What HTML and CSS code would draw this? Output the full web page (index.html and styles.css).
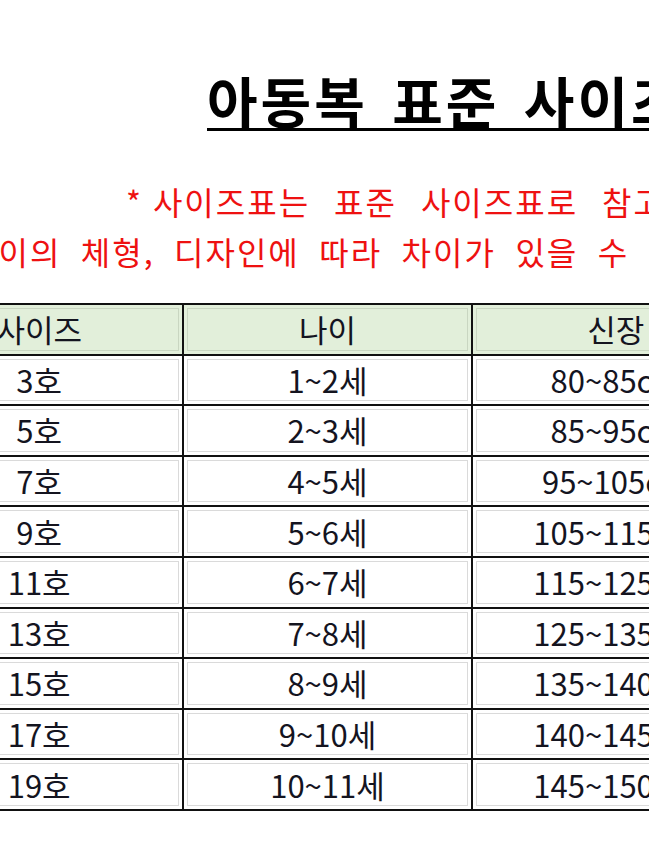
FILE: index.html
```html
<!DOCTYPE html>
<html lang="ko">
<head>
<meta charset="utf-8">
<title>아동복 표준 사이즈표</title>
<link rel="stylesheet" href="styles.css">
</head>
<body>
<div class="sheet">
  <h1 class="title"><span class="title-text">아동복 표준 사이즈표</span></h1>
  <div class="notes">
    <p class="note note-1"><span class="star">* </span>사이즈표는 표준 사이즈표로 참고해주시고,</p>
    <p class="note note-2">아이의 체형, 디자인에 따라 차이가 있을 수 있습니다.</p>
  </div>
  <table class="size-table">
    <thead>
      <tr><th>사이즈</th><th>나이</th><th>신장</th></tr>
    </thead>
    <tbody>
      <tr><td>3호</td><td>1~2세</td><td>80~85cm</td></tr>
      <tr><td>5호</td><td>2~3세</td><td>85~95cm</td></tr>
      <tr><td>7호</td><td>4~5세</td><td>95~105cm</td></tr>
      <tr><td>9호</td><td>5~6세</td><td>105~115cm</td></tr>
      <tr><td>11호</td><td>6~7세</td><td>115~125cm</td></tr>
      <tr><td>13호</td><td>7~8세</td><td>125~135cm</td></tr>
      <tr><td>15호</td><td>8~9세</td><td>135~140cm</td></tr>
      <tr><td>17호</td><td>9~10세</td><td>140~145cm</td></tr>
      <tr><td>19호</td><td>10~11세</td><td>145~150cm</td></tr>
    </tbody>
  </table>
</div>
</body>
</html>
```

FILE: styles.css
```css
html, body {
  margin: 0;
  padding: 0;
  background: #ffffff;
}
body {
  width: 649px;
  height: 864px;
  overflow: hidden;
  font-family: "Noto Sans CJK KR", "Noto Sans", sans-serif;
  color: #14141f;
}
.sheet {
  width: 649px;
  white-space: nowrap;
}
.title {
  margin: 0;
  padding: 70px 0 0 207px;
  height: 68px;
  font-size: 55px;
  font-weight: 700;
  line-height: 58px;
  color: #000;
  letter-spacing: 3px;
  word-spacing: 6px;
}
.title-text {
  text-decoration: underline;
  text-decoration-thickness: 3px;
  text-underline-offset: 5px;
}
.notes {
  padding-top: 38px;
  color: #ee1111;
  font-size: 32px;
  line-height: 50px;
  letter-spacing: 2px;
}
.note {
  margin: 0;
}
.note-1 {
  padding-left: 126px;
  word-spacing: 13px;
}
.star {
  word-spacing: -1px;
}
.note-2 {
  margin-left: -33px;
  word-spacing: 8.5px;
}
.size-table {
  width: 867px;
  margin: 27px 0 0 -106px;
  border-collapse: collapse;
  table-layout: fixed;
  font-size: 31px;
}
.size-table th,
.size-table td {
  height: 48.6px;
  padding: 0;
  border: 2px solid #111;
  text-align: center;
  font-weight: 400;
  line-height: 30px;
  box-shadow: inset 0 0 0 3px #ffffff, inset 0 0 0 4px #dadada;
}
.size-table th {
  background: #e2efda;
  box-shadow: inset 0 0 0 3px #e2efda, inset 0 0 0 4px #c9d6c1;
}
```
